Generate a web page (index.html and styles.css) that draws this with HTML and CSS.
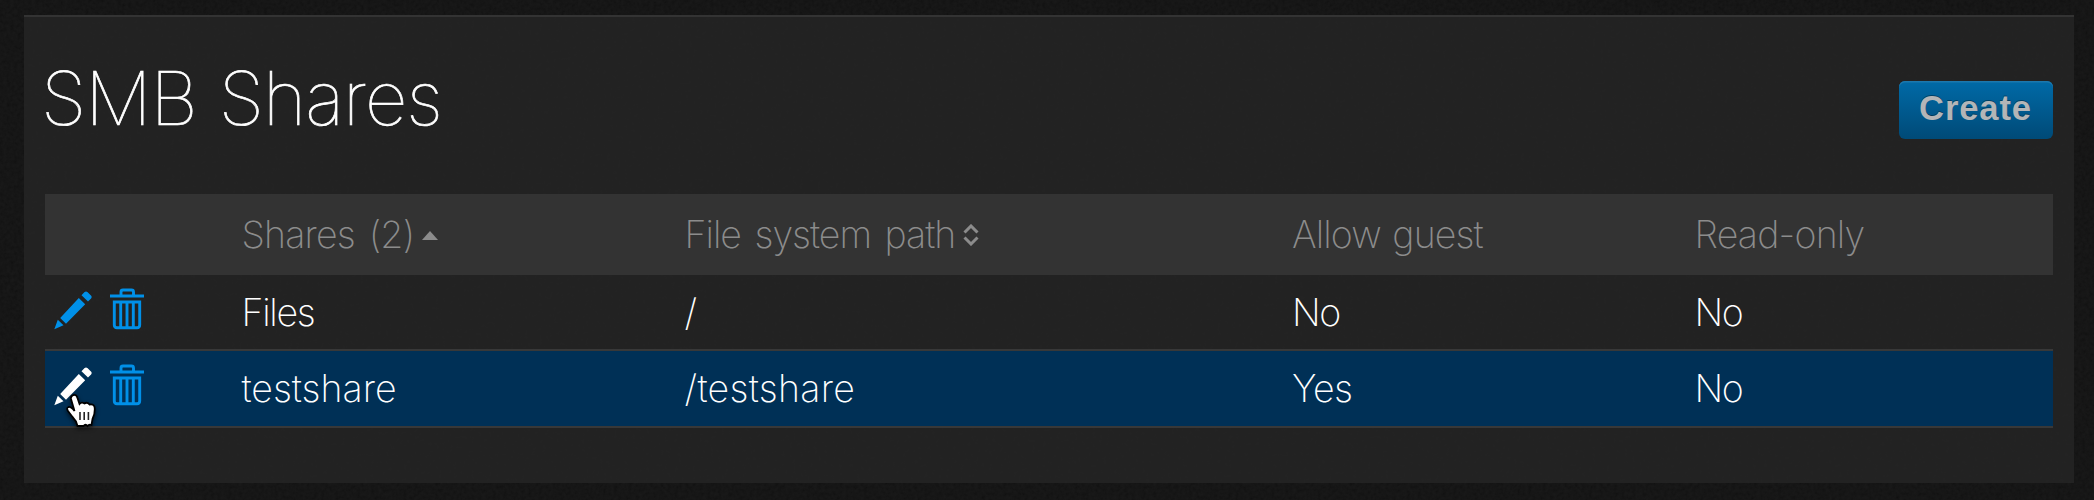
FILE: index.html
```html
<!DOCTYPE html>
<html lang="en">
<head>
<meta charset="utf-8">
<title>SMB Shares</title>
<link rel="stylesheet" href="styles.css">
</head>
<body>
<svg class="grain" aria-hidden="true">
  <filter id="noise" x="0" y="0" width="100%" height="100%">
    <feTurbulence type="fractalNoise" baseFrequency="0.28" numOctaves="3" seed="4"/>
    <feColorMatrix type="matrix" values="1 0 0 0 0  1 0 0 0 0  1 0 0 0 0  0 0 0 0 1"/>
  </filter>
  <rect width="100%" height="100%" filter="url(#noise)"/>
</svg>
<svg class="symbols" aria-hidden="true">
  <symbol id="pencil" viewBox="0 0 40 40">
    <path d="M1.3 39.3 4.8 29.8 10.5 35.3ZM7.2 28 25.8 8 32.2 14.2 13 33.8ZM28.5 5.3 31.6 2Q33 .8 34.4 2L38.2 5.8Q39.4 7.1 38.1 8.4L35 11.6Z" fill="currentColor"/>
  </symbol>
  <symbol id="trash" viewBox="0 0 34 42">
    <path d="M0 8H34M11 7V4Q11 2 13 2H21.5Q23.5 2 23.5 4V7M4.3 14H29.7V37Q29.7 39.7 27 39.7H7Q4.3 39.7 4.3 37ZM10.7 14V39M17 14V39M23.3 14V39" fill="none" stroke="currentColor" stroke-width="2.9"/>
  </symbol>
</svg>
<main class="panel">
  <header class="panel-header">
    <h1 class="title">SMB Shares</h1>
    <button class="create">Create</button>
  </header>
  <div class="table">
    <div class="row head">
      <div></div>
      <div><span class="h-shares">Shares (2)</span><svg class="sort-up" viewBox="0 0 16 9"><path d="M0 9 8 0 16 9Z" fill="currentColor"/></svg></div>
      <div><span class="h-path">File system path</span><svg class="sort-both" viewBox="0 0 16 22"><path d="M1.5 8.5 8 2 14.5 8.5M1.5 13.5 8 20 14.5 13.5" fill="none" stroke="currentColor" stroke-width="3"/></svg></div>
      <div><span class="h-guest">Allow guest</span></div>
      <div><span class="h-ro">Read-only</span></div>
    </div>
    <div class="row">
      <div class="actions"><svg class="pencil"><use href="#pencil"/></svg><svg class="trash"><use href="#trash"/></svg></div>
      <div><span class="files">Files</span></div>
      <div><span class="root">/</span></div>
      <div><span class="no">No</span></div>
      <div><span class="no">No</span></div>
    </div>
    <div class="row selected">
      <div class="actions"><svg class="pencil active"><use href="#pencil"/></svg><svg class="trash"><use href="#trash"/></svg>
        <svg class="cursor" viewBox="0 0 32 36"><path d="M7.500 2C10 1.500 11 3 11.500 5L13.500 11Q15.500 8.500 18.500 10.500 21 8.500 23.500 11.500 28.800 10.500 28.800 16 29 21 26.500 26L25.500 32Q23 31 21.500 33 19.500 30.500 17.500 33H11.500Q10.500 28 6.500 24L2 18Q0 15 2.500 14 5 13.500 8.500 18L5 6Q4.500 3 7.500 2Z" fill="#fff" stroke="#000" stroke-width="1.800"/><path d="M14 19V27M18.200 19V27M22.400 19V27" stroke="#222" stroke-width="1.600"/></svg>
      </div>
      <div><span class="test">testshare</span></div>
      <div><span class="path">/testshare</span></div>
      <div><span class="yes">Yes</span></div>
      <div><span class="no">No</span></div>
    </div>
  </div>
</main>
</body>
</html>
```
FILE: styles.css
```css
* { box-sizing: border-box; }
body {
  margin: 0;
  height: 500px;
  overflow: hidden;
  background: #0d0d0d;
  color: #fff;
  font-family: Inter, "Liberation Sans", sans-serif;
  padding: 15px 20px 17px 24px;
}
.grain {
  position: absolute;
  inset: 0;
  width: 100%;
  height: 100%;
  opacity: 0.05;
}
.symbols { position: absolute; width: 0; height: 0; }
.panel {
  position: relative;
  height: 468px;
  padding: 0 21px 0 20.5px;
  border-top: 2px solid #333;
  background: rgba(36, 36, 36, 0.88);
}
.panel-header {
  display: flex;
  justify-content: space-between;
  align-items: flex-start;
  height: 177px;
}
.title {
  margin: 34px 0 0 -3.5px;
  font-size: 74px;
  line-height: 94px;
  font-weight: 140;
  letter-spacing: -1px;
  word-spacing: 2px;
  white-space: nowrap;
  -webkit-text-stroke: 0.7px #fff;
}
.create {
  width: 154px;
  height: 58px;
  margin: 64px 0 0;
  padding: 0 1px 4px 0;
  border: 0;
  border-radius: 6px;
  background: linear-gradient(#006aa7, #004a77);
  box-shadow: inset 0 1.5px 0 #1c78ad;
  color: #b3b5b7;
  font: bold 34.5px "Liberation Sans", sans-serif;
  letter-spacing: 0.9px;
  text-shadow: 0 -1px 0 rgba(0, 0, 0, 0.35);
}
.row {
  display: grid;
  grid-template-columns: 197px 443px 607.5px 402.5px 1fr;
  height: 77px;
  border-bottom: 2px solid #383838;
  font-size: 37.5px;
  font-weight: 200;
  line-height: 74px;
  white-space: nowrap;
}
.row > div { display: flex; align-items: center; padding-top: 1px; }
.head {
  height: 81px;
  border: 0;
  background: #333;
  color: #8c8c8c;
}
.row:nth-child(2) { height: 76px; }
.selected { background: #003056; }
.h-shares { letter-spacing: -0.8px; word-spacing: 4px; }
.h-path { letter-spacing: -1px; word-spacing: 4px; }
.h-guest { letter-spacing: -0.9px; word-spacing: 2px; }
.h-ro { letter-spacing: -0.8px; }
.files { letter-spacing: -1.3px; }
.path { letter-spacing: 0.3px; }
.yes { letter-spacing: -0.6px; }
.no { letter-spacing: -1.5px; }
.sort-up { width: 16px; height: 9px; margin-left: 8px; }
.sort-both { width: 16px; height: 22px; margin-left: 8px; }
.row > .actions {
  position: relative;
  align-items: flex-start;
  padding: 13px 0 0 8.5px;
  gap: 16.5px;
  color: #0090e8;
}
.pencil { width: 40px; height: 40px; margin-top: 1.5px; }
.active { color: #fff; }
.trash { width: 34px; height: 42px; }
.cursor {
  position: absolute;
  left: 21px;
  top: 42px;
  width: 32px;
  height: 36px;
  z-index: 1;
  filter: drop-shadow(0 2px 2px rgba(0, 0, 0, 0.6));
}
```
